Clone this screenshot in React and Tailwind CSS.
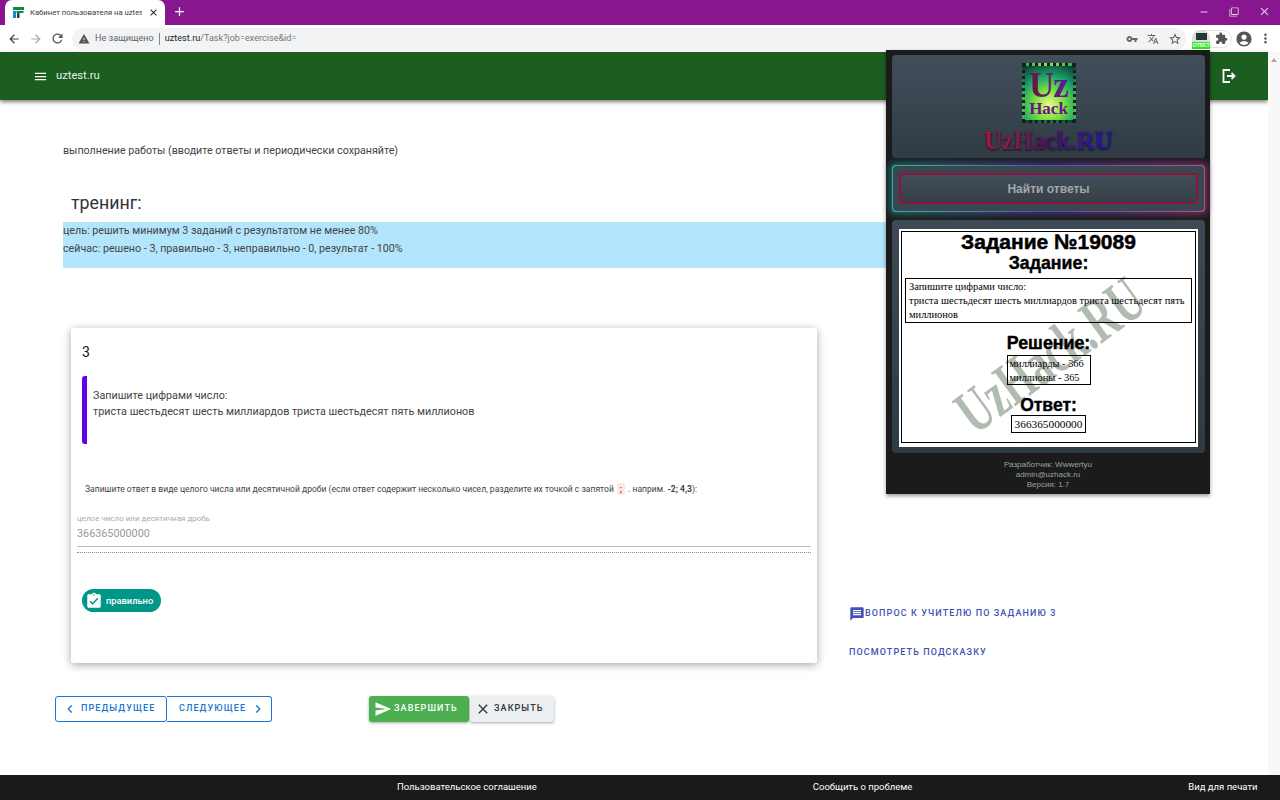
import React from "react";
import { MdArrowBack, MdArrowForward, MdRefresh, MdWarning, MdVpnKey, MdStarBorder, MdExtension, MdAccountCircle, MdMoreVert, MdTranslate, MdMenu, MdAssignmentTurnedIn, MdMessage, MdSend, MdClose, MdChevronLeft, MdChevronRight, MdAdd, MdRemove, MdFilterNone } from "react-icons/md";

function Favicon() {
  return (
    <svg width="11" height="11" viewBox="0 0 11 11" className="shrink-0">
      <rect x="0" y="0" width="11" height="3" fill="#0f8a4a" />
      <rect x="3.5" y="4" width="7" height="2" fill="#0f8a4a" />
      <rect x="0" y="4" width="3" height="7" fill="#1e88c7" />
      <rect x="4" y="6" width="2.5" height="5" fill="#12495f" />
    </svg>
  );
}

function Logo() {
  return (
    <div className="w-[54px] h-[60px] border-[3px] border-dotted border-[#1c1c1c] bg-[radial-gradient(circle_at_50%_72%,#eef98a_0%,#7fe23f_32%,#1fa56a_62%,#0b3a32_100%)] flex flex-col items-center justify-center font-['Liberation_Serif',serif] font-bold leading-none overflow-hidden">
      <div className="text-[35px] leading-[29px] tracking-[-1px] bg-gradient-to-r from-[#6a0f3c] to-[#5a1a9a] bg-clip-text text-transparent">Uz</div>
      <div className="text-[17px] leading-[15px] text-[#6a128a] mt-[1px]">Hack</div>
    </div>
  );
}

function Popup() {
  return (
    <div className="absolute left-[886px] top-[50px] w-[324px] h-[444px] bg-[#1b1b1b] px-[6px] pt-[5px] shadow-[0_2px_4px_rgba(0,0,0,0.4)] flex flex-col">
      <div className="w-[313px] h-[103px] rounded-[4px] bg-gradient-to-b from-[#414f5b] to-[#303b44] flex flex-col items-center pt-[8px]">
        <Logo />
        <div className="mt-[5px] font-['Liberation_Serif',serif] font-bold text-[25px] leading-[26px] bg-gradient-to-r from-[#b00f3c] via-[#4a1060] to-[#1a0ab8] bg-clip-text text-transparent drop-shadow-[0_1px_1px_rgba(0,0,0,0.8)]">UzHack.RU</div>
      </div>
      <div className="relative isolate mt-[7px] w-[313px] h-[47px]">
        <div className="absolute -inset-[3px] -z-10 rounded-[6px] bg-gradient-to-r from-[#1f8f8a] via-[#4a3f9f] to-[#a03a80] blur-[3px] opacity-60" />
        <div className="w-full h-full rounded-[4px] p-px bg-gradient-to-r from-[#2fb0a8] via-[#5a4aa8] to-[#b04f98]">
          <div className="w-full h-full rounded-[4px] bg-[#3b4750] px-[6px] py-[7px]">
            <div className="h-[31px] rounded-[3px] border-2 border-[#8e1440] bg-gradient-to-b from-[#414e59] to-[#363f47] flex items-center justify-center font-['Liberation_Sans',sans-serif] font-bold text-[12px] text-[#a3a7ab]">Найти ответы</div>
          </div>
        </div>
      </div>
      <div className="mt-[8px] w-[313px] h-[233px] rounded-[4px] bg-gradient-to-b from-[#3d4a55] to-[#2f3b43] px-[7px] pt-[9px]">
        <div className="relative w-[299px] h-[218px] bg-white p-[2px] overflow-hidden">
          <div className="absolute left-[43px] top-[105px] -rotate-[36deg] scale-y-150 font-['Liberation_Serif',serif] font-bold text-[42px] leading-[42px] text-[#a3b0a3]/85 whitespace-nowrap">UzHack.RU</div>
          <div className="relative h-[212px] border border-black flex flex-col items-center text-black">
            <div className="font-['Liberation_Sans',sans-serif] font-bold text-[21px] leading-[21px] -mt-px [-webkit-text-stroke:0.5px_black]">Задание №19089</div>
            <div className="font-['Liberation_Sans',sans-serif] font-bold text-[17.8px] leading-[20px] mt-px [-webkit-text-stroke:0.4px_black]">Задание:</div>
            <div className="self-stretch mx-[3px] mt-[5px] border border-black h-[45px] px-[3px] pt-px font-['Liberation_Serif',serif] text-[10.4px] leading-[14px] text-black">
              Запишите цифрами число:<br />триста шестьдесят шесть миллиардов триста шестьдесят пять миллионов
            </div>
            <div className="font-['Liberation_Sans',sans-serif] font-bold text-[17.8px] leading-[20px] mt-[10px] [-webkit-text-stroke:0.4px_black]">Решение:</div>
            <div className="border border-black h-[30px] w-[84px] px-[2px] pt-px font-['Liberation_Serif',serif] text-[10.4px] leading-[14px] mt-[2px]">миллиарды - 366<br />миллионы - 365</div>
            <div className="font-['Liberation_Sans',sans-serif] font-bold text-[17.5px] leading-[20px] mt-[10px] [-webkit-text-stroke:0.4px_black]">Ответ:</div>
            <div className="border border-black h-[18px] px-[3px] font-['Liberation_Serif',serif] text-[11.3px] leading-[16px]">366365000000</div>
          </div>
        </div>
      </div>
      <div className="mt-[7px] text-center font-['Liberation_Sans',sans-serif] text-[8px] leading-[10px] text-[#9aa3a8]">
        Разработчик: Wwwertyu<br />admin@uzhack.ru<br />Версия: 1.7
      </div>
    </div>
  );
}

function BrowserChrome() {
  return (
    <>
      <div className="h-[25px] bg-[#87168f] flex items-end pl-[5px] shrink-0">
        <div className="w-[160px] h-[25px] bg-white rounded-t-[7px] flex items-center pl-[8px] pr-[6px] gap-[6px]">
          <Favicon />
          <div className="w-[117px] overflow-hidden whitespace-nowrap text-[7.7px] text-[#3c3c3c]">Кабинет пользователя на uztest.ru</div>
          <MdClose className="text-[11px] text-[#222] shrink-0" />
        </div>
        <MdAdd className="ml-[7px] mb-[6px] text-[15px] text-white" />
        <div className="ml-auto flex items-center gap-[19px] pr-[9px] pb-[7px] text-[#e6cfe8]">
          <MdRemove className="text-[12px]" />
          <MdFilterNone className="text-[10px]" />
          <MdClose className="text-[13px]" />
        </div>
      </div>
      <div className="h-[27px] bg-white flex items-center shrink-0 pl-[7px]">
        <MdArrowBack className="text-[14px] text-[#444]" />
        <MdArrowForward className="ml-[8px] text-[14px] text-[#aaa]" />
        <MdRefresh className="ml-[7px] text-[15px] text-[#555]" />
        <div className="ml-[7px] w-[1114px] h-[22px] rounded-full bg-[#f1f3f4] flex items-center pl-[6px] pr-[4px] text-[9.1px]">
          <MdWarning className="text-[12px] text-[#555]" />
          <span className="ml-[5px] text-[#666]">Не защищено</span>
          <span className="ml-[5px] mr-[5px] w-px h-[12px] bg-[#888]" />
          <span className="text-[#222]">uztest.ru</span><span className="text-[#777]">/Task?job=exercise&amp;id=</span>
          <div className="ml-auto flex items-center gap-[9px] text-[#666]">
            <MdVpnKey className="text-[12px]" />
            <MdTranslate className="text-[12px]" />
            <MdStarBorder className="text-[14px] text-[#555]" />
          </div>
        </div>
        <div className="ml-[6px] w-[40px] h-[18px] rounded-full border border-[#e4e4e4] flex items-center shrink-0">
          <div className="-ml-px w-[18px] h-[17px] rounded-full bg-[#dcdcdc] relative flex justify-center pt-[3px]">
            <div className="w-[11px] h-[7px] bg-[#1f3a34]" />
            <div className="absolute bottom-[-2px] left-0 right-0 h-[7px] bg-[#2fe622] text-[5px] leading-[7px] font-bold text-center text-white font-['Liberation_Sans',sans-serif]">ОТВЕТ</div>
          </div>
          <MdExtension className="ml-[5px] text-[13px] text-[#555]" />
        </div>
        <MdAccountCircle className="ml-[3px] text-[18px] text-[#555]" />
        <MdMoreVert className="ml-[5px] text-[15px] text-[#555]" />
      </div>
    </>
  );
}

export default function App() {
  return (
    <div className="relative w-[1280px] h-[800px] overflow-hidden bg-white flex flex-col font-['Roboto',sans-serif]">
      <BrowserChrome />
      <div className="flex-1 flex min-h-0">
        <div className="flex-1 flex flex-col min-w-0">
          <header className="h-[48px] bg-[#1b5e20] shadow-[0_2px_4px_rgba(0,0,0,0.5)] flex items-center pl-[33px] shrink-0 text-white">
            <MdMenu className="text-[15px]" />
            <span className="ml-[8px] text-[11.2px] text-[#e8f0e8]">uztest.ru</span>
            <svg width="14" height="14" viewBox="0 0 14 14" fill="none" stroke="white" strokeWidth="1.8" className="ml-auto mr-[32px]">
              <path d="M8 1H1.5v12H8M5 7h7M9.5 4l3 3-3 3" />
            </svg>
          </header>
          <div className="flex-1 pl-[63px]">
            <p className="mt-[44px] text-[10.7px] leading-[14px] text-[#444]">выполнение работы (вводите ответы и периодически сохраняйте)</p>
            <h2 className="mt-[33px] ml-[8px] text-[17.8px] leading-[24px] text-[#333]">тренинг:</h2>
            <div className="mt-[7px] w-[900px] h-[46px] bg-[#b3e5fc] text-[10.7px] leading-[18px] text-[#444]">
              цель: решить минимум 3 заданий с результатом не менее 80%<br />сейчас: решено - 3, правильно - 3, неправильно - 0, результат - 100%
            </div>
            <div className="mt-[60px] ml-[8px] flex">
              <section className="w-[746px] h-[335px] bg-white rounded-[2px] shadow-[0_2px_8px_rgba(0,0,0,0.35)] flex flex-col px-[6px]">
                <div className="ml-[5px] mt-[16px] text-[14px] leading-[16px] text-[#111]">3</div>
                <div className="ml-[5px] mt-[16px] h-[68px] border-l-[5.5px] border-[#6200ea] rounded-l-[3px] pl-[6px] pt-[12px] text-[10.75px] leading-[16px] text-[#444]">
                  Запишите цифрами число:<br />триста шестьдесят шесть миллиардов триста шестьдесят пять миллионов
                </div>
                <div className="ml-[8px] mt-[39px] flex items-center text-[8.55px] leading-[12px] text-[#444] whitespace-nowrap">
                  Запишите ответ в виде целого числа или десятичной дроби (если ответ содержит несколько чисел, разделите их точкой с запятой
                  <span className="mx-[3px] px-[3px] bg-[#fde8e8] rounded-[2px] text-[#d32f2f] font-bold">;</span>
                  . наприм.&nbsp;<b>-2; 4,3</b>):
                </div>
                <div className="mt-[18px] text-[8px] leading-[11px] text-[#aaa]">целое число или десятичная дробь</div>
                <div className="mt-[2px] text-[10.8px] leading-[16px] text-[#999]">366365000000</div>
                <div className="mt-[4px] border-t border-[#bbb]" />
                <div className="mt-[5px] border-t border-dotted border-[#888]" />
                <div className="ml-[5px] mt-[36px] w-[79px] h-[23px] rounded-full bg-[#009688] flex items-center pl-[3px] text-white">
                  <MdAssignmentTurnedIn className="text-[18px]" />
                  <span className="ml-[3px] text-[9.3px] font-medium">правильно</span>
                </div>
              </section>
              <div className="ml-[32px] self-end mb-[4px] text-[#3f51b5] text-[9px] font-medium tracking-[1.1px] uppercase">
                <div className="flex items-center">
                  <MdMessage className="text-[16px]" />
                  <span>Вопрос к учителю по заданию 3</span>
                </div>
                <div className="mt-[24px]">Посмотреть подсказку</div>
              </div>
            </div>
            <div className="mt-[33px] -ml-[8px] flex text-[9px] font-medium tracking-[1.1px]">
              <button className="uppercase w-[112px] h-[26px] border border-[#1976d2] rounded-[3px] text-[#1976d2] flex items-center pl-[6px] gap-[3px]">
                <MdChevronLeft className="text-[16px]" />Предыдущее
              </button>
              <button className="uppercase w-[105px] h-[26px] border border-l-0 border-[#1976d2] rounded-r-[3px] text-[#1976d2] flex items-center pl-[12px] gap-[4px]">
                Следующее<MdChevronRight className="text-[16px]" />
              </button>
              <button className="uppercase ml-[97px] w-[100px] h-[26px] bg-[#4caf50] rounded-[3px] text-white shadow-[0_1px_3px_rgba(0,0,0,0.35)] flex items-center pl-[5px] gap-[2px]">
                <MdSend className="text-[18px]" />Завершить
              </button>
              <button className="uppercase ml-px w-[84px] h-[26px] bg-[#eceff1] rounded-[3px] text-[#333] shadow-[0_1px_3px_rgba(0,0,0,0.35)] flex items-center pl-[5px] gap-[3px]">
                <MdClose className="text-[16px]" />Закрыть
              </button>
            </div>
          </div>
        </div>
        <div className="w-[12px] shrink-0 bg-[#f8f8f8] flex justify-center pt-[6px]">
          <div className="w-0 h-0 border-x-[3px] border-x-transparent border-b-[4px] border-b-[#aaa]" />
        </div>
      </div>
      <footer className="h-[25px] bg-[#1a1a1a] shrink-0 flex items-center text-[9.5px] text-white whitespace-nowrap">
        <span className="ml-[397px]">Пользовательское соглашение</span>
        <span className="ml-[276px]">Сообщить о проблеме</span>
        <span className="ml-[276px]">Вид для печати</span>
      </footer>
      <Popup />
    </div>
  );
}
